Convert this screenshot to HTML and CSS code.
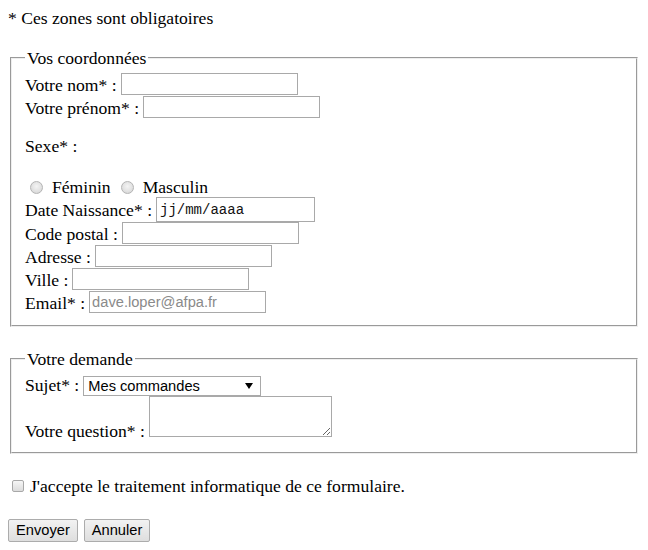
FILE: index.html
```html
<!DOCTYPE html>
<html lang="fr">
<head>
<meta charset="utf-8">
<title>Formulaire de contact</title>
<link rel="stylesheet" href="styles.css">
</head>
<body>
<form class="form">
  <div class="note">* Ces zones sont obligatoires</div>

  <fieldset class="box">
    <legend class="box-title">Vos coordonnées</legend>
    <div class="row"><label for="nom">Votre nom* :</label><input id="nom" class="field" type="text"></div>
    <div class="row"><label for="prenom">Votre prénom* :</label><input id="prenom" class="field" type="text"></div>
    <div class="sexe">Sexe* :</div>
    <div class="radios">
      <input type="radio" name="sexe" id="feminin" class="radio"><label for="feminin" class="radio-label">Féminin</label>
      <input type="radio" name="sexe" id="masculin" class="radio radio-second"><label for="masculin" class="radio-label">Masculin</label>
    </div>
    <div class="row row-date"><label for="naissance">Date Naissance* :</label><input id="naissance" class="field field-date" type="text" value="jj/mm/aaaa"></div>
    <div class="row"><label for="cp">Code postal :</label><input id="cp" class="field" type="text"></div>
    <div class="row"><label for="adresse">Adresse :</label><input id="adresse" class="field" type="text"></div>
    <div class="row"><label for="ville">Ville :</label><input id="ville" class="field" type="text"></div>
    <div class="row"><label for="email">Email* :</label><input id="email" class="field" type="email" placeholder="dave.loper@afpa.fr"></div>
  </fieldset>

  <fieldset class="box box-second">
    <legend class="box-title">Votre demande</legend>
    <div class="row row-select">
      <label for="sujet">Sujet* :</label>
      <span class="select-wrap">
        <select id="sujet" class="select">
          <option>Mes commandes</option>
          <option>Question sur un produit</option>
          <option>Réclamation</option>
          <option>Autres</option>
        </select>
        <svg class="select-arrow" width="8" height="6" viewBox="0 0 8 6" aria-hidden="true"><path d="M0 0H8L4 6Z" fill="#000"/></svg>
      </span>
    </div>
    <div class="row row-question">
      <label for="question" class="question-label">Votre question* :</label>
      <textarea id="question" class="area"></textarea>
    </div>
  </fieldset>

  <div class="accept">
    <input type="checkbox" id="accept" class="check"><label for="accept">J'accepte le traitement informatique de ce formulaire.</label>
  </div>

  <div class="actions">
    <button type="submit" class="btn">Envoyer</button>
    <button type="reset" class="btn">Annuler</button>
  </div>
</form>
</body>
</html>
```

FILE: styles.css
```css
html {
  background: #fff;
}

body {
  margin: 8px;
  font-family: "Liberation Serif", "Times New Roman", serif;
  font-size: 17.6px;
  line-height: 20px;
  color: #000;
  background: #fff;
}

.form {
  margin: 0;
}

.note {
  height: 20px;
}

.box {
  margin: 20px 2px 0;
  padding: 5px 13px 11px;
  border: 2px groove #eeeeee;
  min-width: 0;
}

.box-second {
  margin-top: 22px;
}

.box-title {
  padding: 0 2px;
  line-height: 20px;
}

.row {
  display: flex;
  align-items: flex-start;
  gap: 4px;
  height: 23px;
}

.row label {
  align-self: center;
  white-space: nowrap;
}

.field {
  box-sizing: border-box;
  width: 177px;
  height: 22px;
  margin: 0;
  padding: 1px 2px;
  border: 1px solid #a9a9a9;
  border-radius: 0;
  background: #fff;
  font-family: "Liberation Sans", Arial, sans-serif;
  font-size: 14.67px;
  color: #000;
  outline: none;
}

.field::placeholder {
  color: #8a8a8a;
  opacity: 1;
}

.row-date {
  height: 25px;
}

.field-date {
  width: 159px;
  height: 25px;
  padding: 0 3px;
  font-family: "Liberation Mono", "Courier New", monospace;
  font-size: 14px;
  color: #111;
}

.sexe {
  margin-top: 17px;
  height: 20px;
}

.radios {
  display: flex;
  align-items: center;
  margin-top: 21px;
  height: 20px;
}

.radio {
  appearance: none;
  -webkit-appearance: none;
  box-sizing: border-box;
  width: 13px;
  height: 13px;
  margin: 0 9px 0 5px;
  border: 1px solid #b4b4b4;
  border-radius: 50%;
  background: radial-gradient(circle at 50% 40%, #f4f4f4 0%, #e2e2e2 55%, #d0d0d0 100%);
}

.radio-second {
  margin-left: 10px;
}

.row-select {
  height: 22px;
  align-items: flex-end;
}

.select-wrap {
  position: relative;
  display: inline-block;
  width: 178px;
  height: 20px;
}

.select {
  appearance: none;
  -webkit-appearance: none;
  box-sizing: border-box;
  display: block;
  width: 178px;
  height: 20px;
  margin: 0;
  padding: 0 20px 0 4px;
  border: 1px solid #a9a9a9;
  border-radius: 0;
  background: #fff;
  font-family: "Liberation Sans", Arial, sans-serif;
  font-size: 14.67px;
  line-height: 18px;
  color: #000;
  outline: none;
}

.select-arrow {
  position: absolute;
  right: 8px;
  top: 7px;
  pointer-events: none;
}

.row-question {
  height: 45px;
}

.row-question .question-label {
  align-self: flex-end;
}

.area {
  box-sizing: border-box;
  width: 183px;
  height: 41px;
  margin: 0;
  padding: 2px;
  border: 1px solid #a9a9a9;
  border-radius: 0;
  font-family: "Liberation Sans", Arial, sans-serif;
  font-size: 14.67px;
  outline: none;
}

.accept {
  display: flex;
  align-items: center;
  height: 20px;
  margin-top: 22px;
}

.check {
  appearance: none;
  -webkit-appearance: none;
  box-sizing: border-box;
  width: 12px;
  height: 12px;
  margin: 0 6px 0 4px;
  border: 1px solid #a8a8a8;
  border-radius: 2px;
  background: linear-gradient(#f6f6f6, #dcdcdc);
}

.actions {
  display: flex;
  gap: 6px;
  margin-top: 23px;
}

.btn {
  box-sizing: border-box;
  height: 23px;
  margin: 0;
  padding: 0 7px;
  border: 1px solid #acacac;
  border-radius: 2px;
  background: linear-gradient(#f2f2f2, #dedede);
  font-family: "Liberation Sans", Arial, sans-serif;
  font-size: 14.67px;
  line-height: 21px;
  color: #000;
}
```
